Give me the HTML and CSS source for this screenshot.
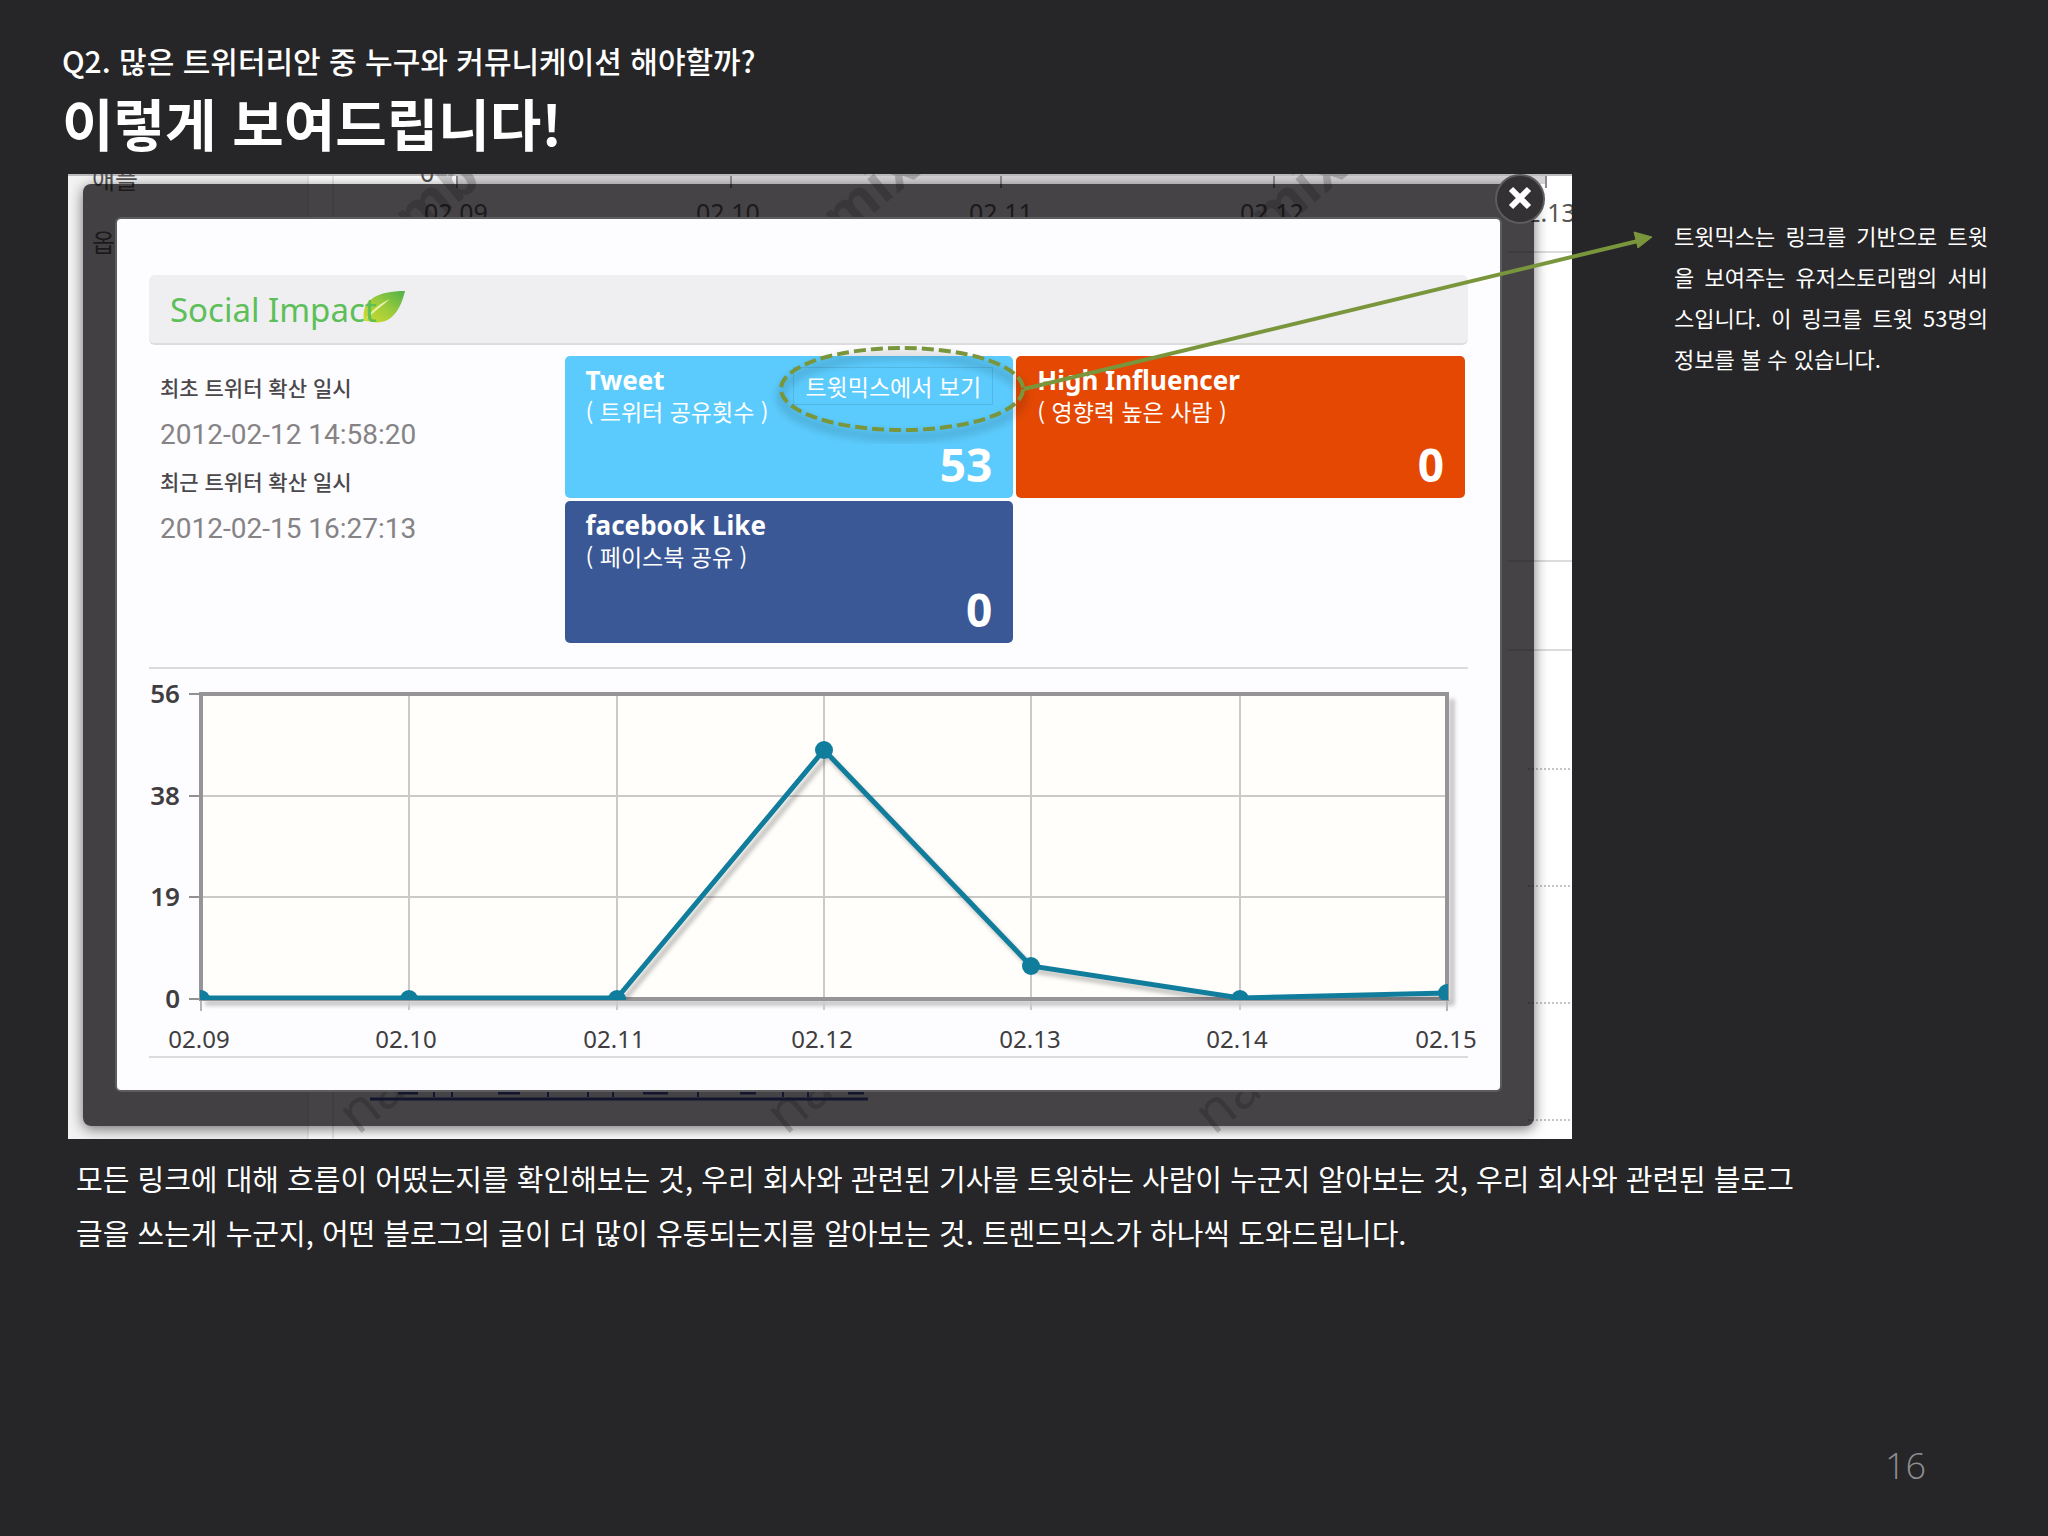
FILE: index.html
```
<!DOCTYPE html>
<html lang="ko">
<head>
<meta charset="utf-8">
<meta name="viewport" content="width=device-width, initial-scale=1">
<title>이렇게 보여드립니다!</title>
<link rel="stylesheet" href="styles.css">
</head>
<body>
<main class="slide">
  <header class="heading">
    <p class="question">Q2. 많은 트위터리안 중 누구와 커뮤니케이션 해야할까?</p>
    <h1 class="title">이렇게 보여드립니다!</h1>
  </header>

  <div class="stage">
    <div class="screen">
      <!-- page that lies behind the dialog -->
      <svg class="backdrop" viewBox="0 0 1504 965" preserveAspectRatio="xMinYMin slice" aria-hidden="true">
        <rect x="0" y="0" width="240" height="965" fill="#f4f3f4"/>
        <rect x="389" y="2" width="1089" height="8" fill="#d6d3d7"/>
        <path d="M240 0V965M265 0V965" stroke="#d8d6d8"/>
        <path d="M389 0V14M663 0V14M933 0V14M1206 0V14M1478 0V14" stroke="#8e8c8e" stroke-width="2"/>
        <path d="M0 1H1504" stroke="#bdbbbe" stroke-width="2"/>
        <g class="backdrop-text">
          <text x="24" y="15">애플</text>
          <text x="24" y="78">옵</text>
          <text x="352" y="8">0</text>
          <text x="356" y="48">02.09</text>
          <text x="628" y="48">02.10</text>
          <text x="901" y="48">02.11</text>
          <text x="1172" y="48">02.12</text>
          <text x="1444" y="48">02.13</text>
        </g>
        <g class="watermark">
          <text transform="translate(346 66) rotate(-40)">mb</text>
          <text transform="translate(774 66) rotate(-40)">mix</text>
          <text transform="translate(1202 66) rotate(-40)">mix</text>
          <text class="thin" transform="translate(290 962) rotate(-40)">na</text>
          <text class="thin" transform="translate(718 962) rotate(-40)">na</text>
          <text class="thin" transform="translate(1146 962) rotate(-40)">na</text>
        </g>
        <path d="M1440 78H1504M1440 387H1504M1440 476H1504" stroke="#dddbde" stroke-width="2"/>
        <path d="M1460 595H1504M1460 712H1504M1460 829H1504M1460 946H1504" stroke="#c4c4c4" stroke-width="2" stroke-dasharray="2 2"/>
        <path d="M302 925H800" stroke="#2a3f9c" stroke-width="3"/>
        <path d="M330 919H350M430 919H452M575 919H600M672 919H688M780 919H796" stroke="#2a3f9c" stroke-width="3"/>
        <path d="M366 916V923M384 916V923M480 916V923M520 916V923M545 916V923M630 916V923M715 916V923M740 916V923" stroke="#2a3f9c" stroke-width="2"/>
      </svg>

      <section class="dialog" aria-label="Social Impact">
        <button class="close" type="button" aria-label="닫기">
          <svg viewBox="0 0 52 52" width="52" height="52" aria-hidden="true">
            <circle cx="26" cy="25" r="24" fill="#333133" stroke="#5d5b5e" stroke-width="2"/>
            <path d="M17 15L35 33M35 15L17 33" stroke="#fff" stroke-width="6"/>
          </svg>
        </button>
        <div class="panel">
          <div class="bar">
            <h2 class="bar-title">Social Impact</h2>
            <svg class="leaf" viewBox="0 0 44 34" width="44" height="34" aria-hidden="true">
              <defs>
                <linearGradient id="leaf" x1="0" y1="1" x2="1" y2="0">
                  <stop offset="0" stop-color="#d3dc2c"/>
                  <stop offset=".5" stop-color="#9ccb3c"/>
                  <stop offset="1" stop-color="#4fb14a"/>
                </linearGradient>
              </defs>
              <path d="M2 31C-1 12 12 1 43 1C38 22 28 35 10 32C7 31 5 31 2 31Z" fill="url(#leaf)"/>
              <path d="M3 30C10 20 17 14 28 9C20 16 13 21 3 30Z" fill="#e9f3a8"/>
            </svg>
          </div>

          <div class="summary">
            <dl class="dates">
              <dt>최초 트위터 확산 일시</dt>
              <dd>2012-02-12 14:58:20</dd>
              <dt>최근 트위터 확산 일시</dt>
              <dd>2012-02-15 16:27:13</dd>
            </dl>
            <div class="cards">
              <article class="card tweet">
                <h3>Tweet</h3>
                <p>( 트위터 공유횟수 )</p>
                <button class="view" type="button">트윗믹스에서 보기</button>
                <strong>53</strong>
              </article>
              <article class="card influencer">
                <h3>High Influencer</h3>
                <p>( 영향력 높은 사람 )</p>
                <strong>0</strong>
              </article>
              <article class="card facebook">
                <h3>facebook Like</h3>
                <p>( 페이스북 공유 )</p>
                <strong>0</strong>
              </article>
            </div>
          </div>

          <div class="chart">
            <svg viewBox="0 0 1319 387" role="img" aria-label="날짜별 트윗 수">
              <defs>
                <clipPath id="plot"><rect x="51" y="20" width="1248" height="311"/></clipPath>
                <filter id="soft" x="-10%" y="-10%" width="120%" height="120%"><feGaussianBlur stdDeviation="2"/></filter>
              </defs>
              <path d="M56 334H1303V30" fill="none" stroke="#000" stroke-opacity=".25" stroke-width="5" filter="url(#soft)"/>
              <rect x="52" y="25" width="1246" height="305" fill="#fffefa"/>
              <path d="M260 25V341M468 25V341M675 25V341M882 25V341M1091 25V341M52 127H1298M52 228H1298" stroke="#cbcac9" stroke-width="2"/>
              <path d="M52 330V342M1298 330V342" stroke="#b5b4b5" stroke-width="2"/>
              <path d="M40 25H52M40 127H52M40 228H52M40 330H52" stroke="#929192" stroke-width="2"/>
              <rect x="52" y="25" width="1246" height="305" fill="none" stroke="#969496" stroke-width="4"/>
              <g clip-path="url(#plot)">
                <path d="M56 334H472L679 87L886 302L1095 334L1302 328" fill="none" stroke="#000" stroke-opacity=".25" stroke-width="5" filter="url(#soft)"/>
                <path d="M52 329H468L675 81L882 297L1091 329L1298 324" fill="none" stroke="#117d9d" stroke-width="5"/>
                <g fill="#117d9d">
                  <circle cx="52" cy="330" r="9"/>
                  <circle cx="260" cy="330" r="9"/>
                  <circle cx="468" cy="330" r="9"/>
                  <circle cx="675" cy="81" r="9"/>
                  <circle cx="882" cy="297" r="9"/>
                  <circle cx="1091" cy="330" r="9"/>
                  <circle cx="1298" cy="324" r="9"/>
                </g>
              </g>
              <g class="axis-y">
                <text x="31" y="34">56</text>
                <text x="31" y="136">38</text>
                <text x="31" y="237">19</text>
                <text x="31" y="339">0</text>
              </g>
              <g class="axis-x">
                <text x="50" y="379">02.09</text>
                <text x="257" y="379">02.10</text>
                <text x="465" y="379">02.11</text>
                <text x="673" y="379">02.12</text>
                <text x="881" y="379">02.13</text>
                <text x="1088" y="379">02.14</text>
                <text x="1297" y="379">02.15</text>
              </g>
            </svg>
          </div>
        </div>
      </section>
    </div>

    <p class="note">트윗믹스는 링크를 기반으로 트윗을 보여주는 유저스토리랩의 서비스입니다. 이 링크를 트윗 53명의 정보를 볼 수 있습니다.</p>

    <svg class="callout" viewBox="0 0 1600 270" width="1600" height="270" aria-hidden="true">
      <defs>
        <filter id="shade" x="-10%" y="-20%" width="120%" height="150%"><feGaussianBlur stdDeviation="5"/></filter>
      </defs>
      <ellipse cx="834" cy="222" rx="121" ry="41" fill="none" stroke="#000" stroke-opacity=".25" stroke-width="5" filter="url(#shade)"/>
      <ellipse cx="834" cy="215" rx="121" ry="41" fill="none" stroke="#7a963c" stroke-width="4" stroke-dasharray="12 5"/>
      <path d="M956 215L1570 67" stroke="#7a963c" stroke-width="4"/>
      <path d="M1584 63L1566 58L1570 74Z" fill="#7a963c" stroke="#7a963c"/>
    </svg>
  </div>

  <p class="body-text">모든 링크에 대해 흐름이 어떴는지를 확인해보는 것, 우리 회사와 관련된 기사를 트윗하는 사람이 누군지 알아보는 것, 우리 회사와 관련된 블로그 글을 쓰는게 누군지, 어떤 블로그의 글이 더 많이 유통되는지를 알아보는 것. 트렌드믹스가 하나씩 도와드립니다.</p>

  <footer class="page-number">16</footer>
</main>
</body>
</html>
```
FILE: styles.css
```
* {
  box-sizing: border-box;
}

body,
h1,
h2,
h3,
p,
dl,
dd {
  margin: 0;
}

body {
  background: #262527;
  color: #fff;
  font-family: "Noto Sans CJK KR", sans-serif;
}

.slide {
  display: flex;
  flex-direction: column;
  min-height: 100vh;
}

.heading {
  padding: 37px 60px 0 62px;
}

.question {
  font-size: 30px;
  font-weight: 500;
  line-height: 46px;
}

.title {
  font-size: 56px;
  font-weight: 700;
  line-height: 78px;
  margin-bottom: 13px;
}

.stage {
  position: relative;
  display: grid;
  grid-template-columns: minmax(0, 1fr) 314px;
  column-gap: 102px;
  padding: 0 60px 0 68px;
}

.screen {
  position: relative;
  padding: 10px 38px 13px 15px;
  background: #fff;
  overflow: hidden;
}

.backdrop {
  position: absolute;
  inset: 0;
  width: 100%;
  height: 100%;
}

.backdrop-text {
  font-family: "Noto Sans", "Noto Sans CJK KR", sans-serif;
  font-size: 25px;
  fill: #555;
}

.watermark {
  font-family: "Noto Sans", sans-serif;
  font-size: 56px;
  font-weight: 700;
  fill: #000;
  fill-opacity: 0.2;
}

.watermark .thin {
  font-weight: 400;
}

.dialog {
  position: relative;
  padding: 35px 34px 36px;
  border-radius: 8px;
  background: rgba(10, 8, 10, 0.76);
  box-shadow: 0 3px 14px rgba(0, 0, 0, 0.55);
}

.close {
  position: absolute;
  top: -10px;
  right: -12px;
  width: 52px;
  height: 52px;
  padding: 0;
  border: 0;
  background: none;
}

.close svg {
  display: block;
}

.panel {
  padding: 56px 32px 32px;
  border-radius: 4px;
  background: #fdfcfe;
  box-shadow: 0 0 0 2px #5d5c5e;
}

.bar {
  display: flex;
  align-items: center;
  height: 70px;
  padding-left: 21px;
  border-bottom: 2px solid #dddcdd;
  border-radius: 6px;
  background: #efeef0;
}

.bar-title {
  position: relative;
  z-index: 1;
  color: #5cbf58;
  font-family: "Noto Sans", sans-serif;
  font-size: 33px;
  font-weight: 400;
}

.leaf {
  margin: 0 0 5px -15px;
}

.summary {
  display: flex;
  justify-content: space-between;
  margin: 11px 3px 24px 11px;
}

.dates {
  padding-top: 8px;
}

.dates dt,
.dates dd {
  line-height: 47px;
}

.dates dt {
  color: #4a484b;
  font-size: 21px;
  font-weight: 500;
}

.dates dd {
  color: #858386;
  font-family: Roboto, sans-serif;
  font-size: 28px;
}

.cards {
  display: grid;
  grid-template-columns: 1fr 1fr;
  gap: 3px;
  width: 69%;
}

.card {
  position: relative;
  display: flex;
  flex-direction: column;
  height: 142px;
  padding: 8px 21px 0;
  border-radius: 5px;
}

.card h3 {
  font-family: "Noto Sans", sans-serif;
  font-size: 26px;
  line-height: 32px;
}

.card p {
  font-size: 23px;
  line-height: 30px;
}

.card strong {
  align-self: flex-end;
  font-family: "Noto Sans", sans-serif;
  font-size: 46px;
  line-height: 76px;
}

.tweet {
  background: #5bcbfd;
}

.influencer {
  background: #e44803;
}

.facebook {
  background: #3b5896;
}

.view {
  position: absolute;
  top: 11px;
  right: 20px;
  width: 200px;
  height: 38px;
  padding: 0;
  border: 1px solid #52b7e5;
  background: none;
  color: #fff;
  font: 400 23px/34px "Noto Sans CJK KR", sans-serif;
}

.chart {
  border: solid #dbdadc;
  border-width: 2px 0;
}

.chart svg {
  display: block;
  width: 100%;
  overflow: visible;
}

.axis-x,
.axis-y {
  font-family: "Noto Sans", sans-serif;
  fill: #3f3d40;
}

.axis-x {
  font-size: 24px;
  text-anchor: middle;
}

.axis-y {
  font-size: 26px;
  font-weight: 600;
  text-anchor: end;
}

.note {
  padding-top: 41px;
  font-size: 22px;
  line-height: 41px;
  text-align: justify;
}

.callout {
  position: absolute;
  top: 0;
  left: 68px;
}

.body-text {
  padding: 12px 222px 0 76px;
  font-size: 29px;
  line-height: 54px;
}

.page-number {
  margin-top: auto;
  padding: 0 122px 45px 0;
  color: #8f8d90;
  font-family: "Open Sans", "Noto Sans", sans-serif;
  font-size: 36px;
  font-weight: 300;
  line-height: 50px;
  text-align: right;
}
```
